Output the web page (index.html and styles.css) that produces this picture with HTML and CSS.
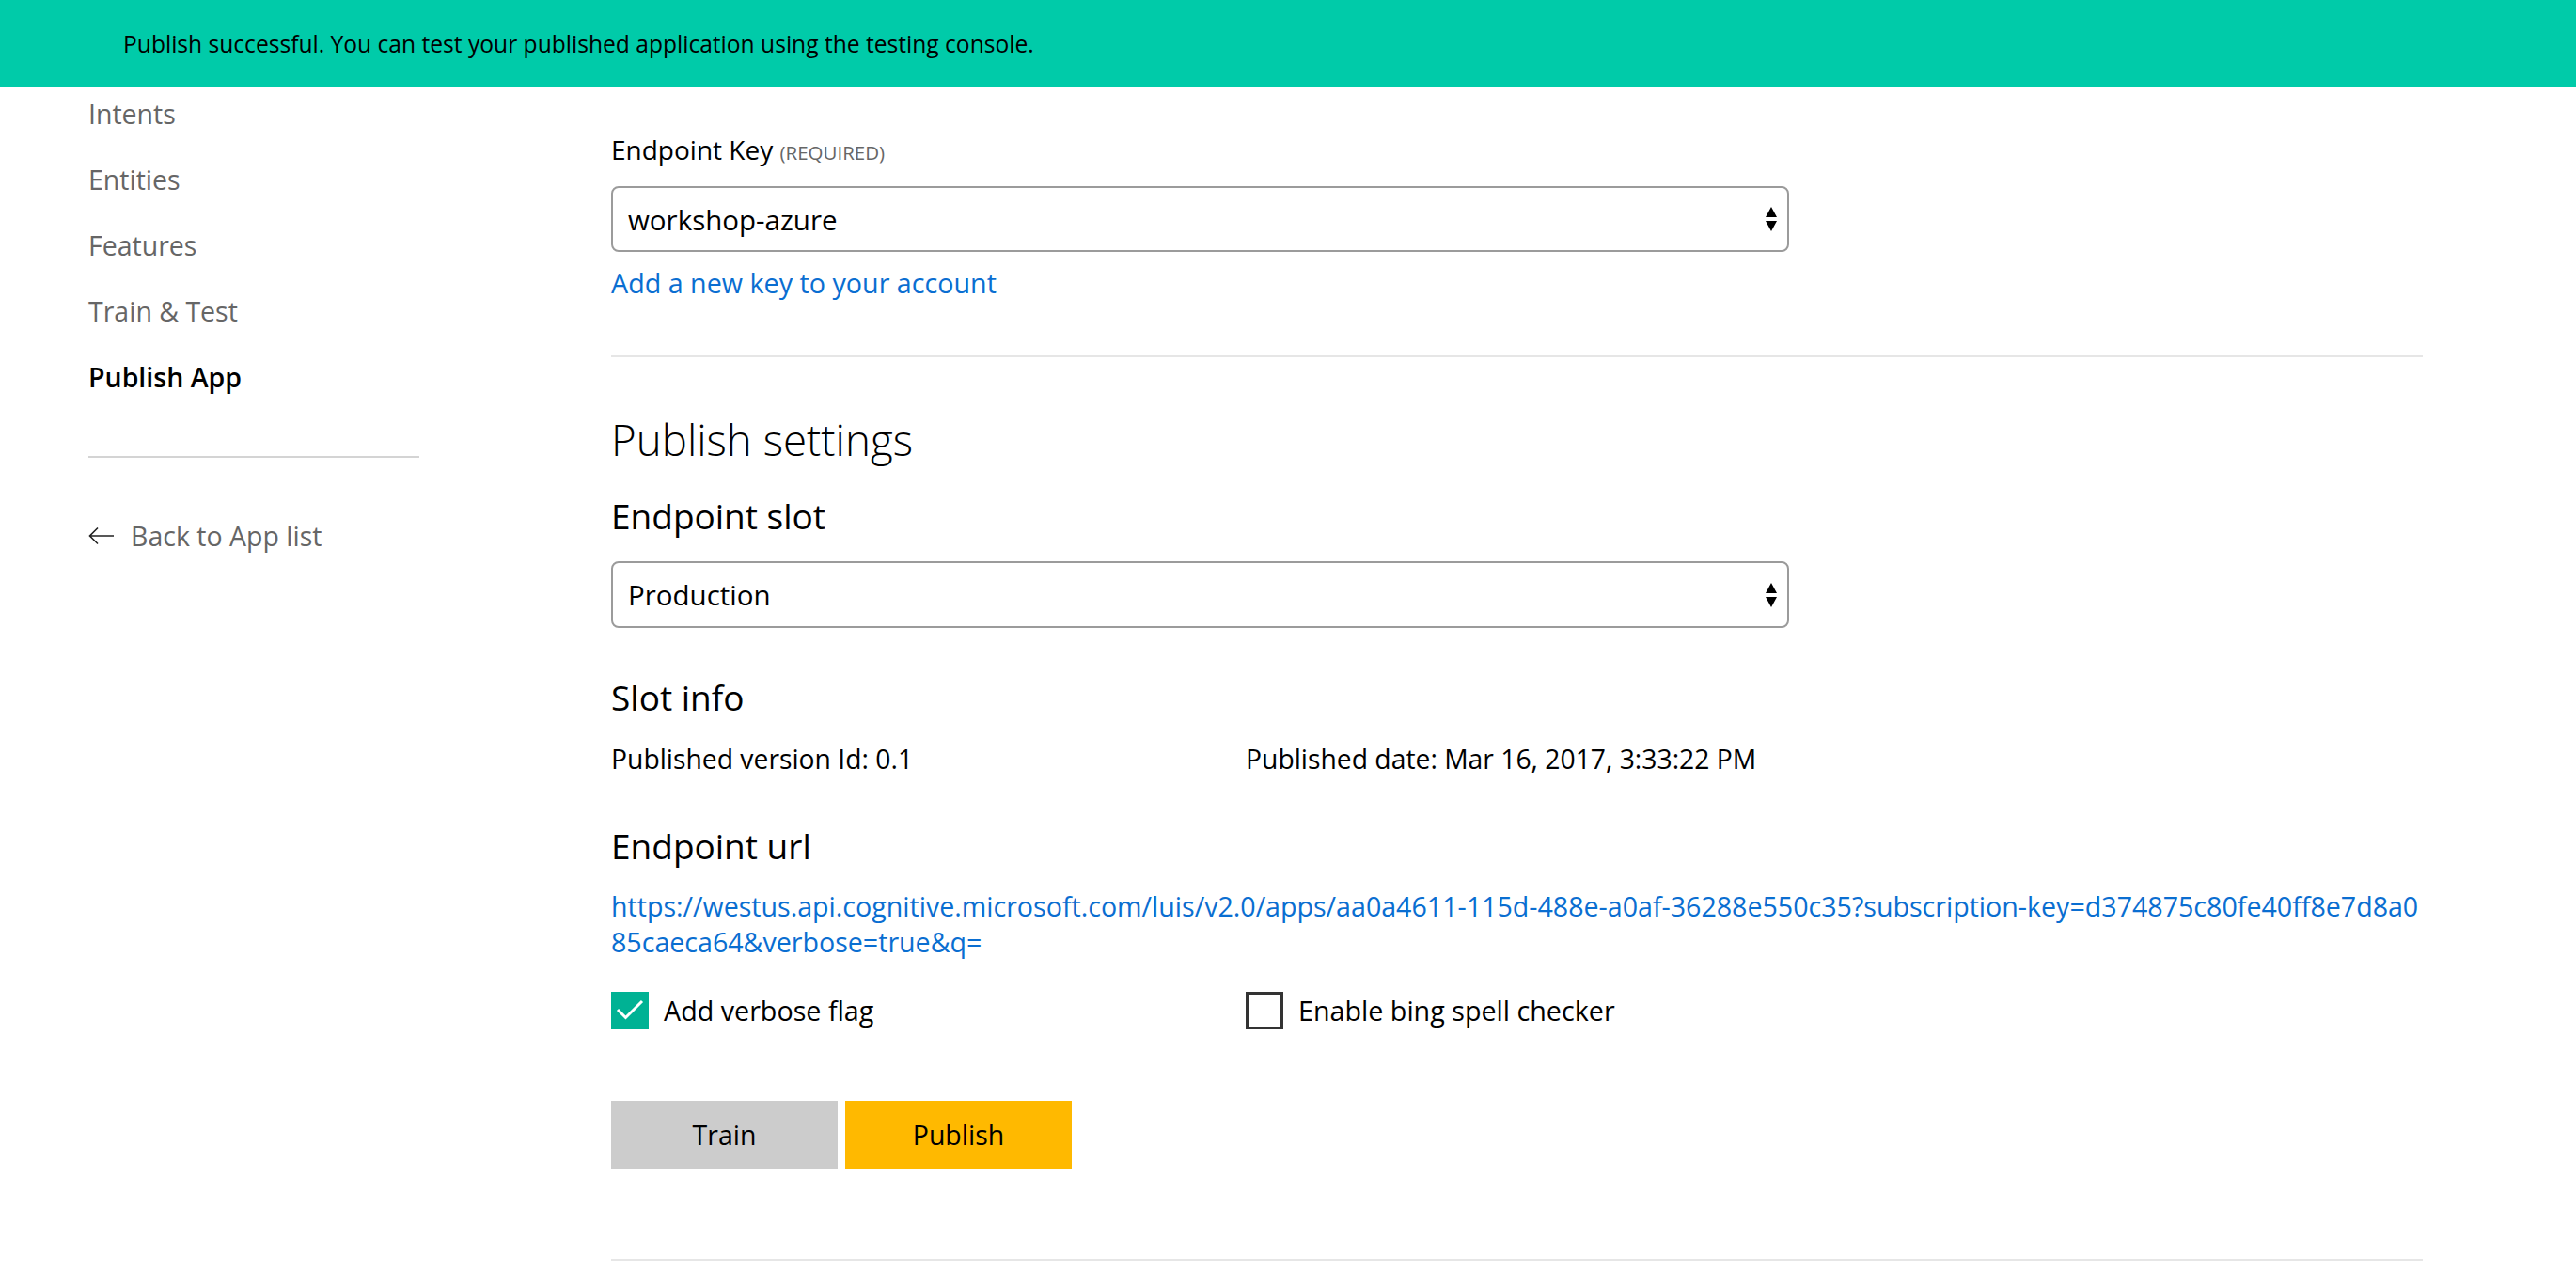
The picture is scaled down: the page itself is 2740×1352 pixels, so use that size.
FILE: index.html
```html
<!DOCTYPE html>
<html lang="en">
<head>
<meta charset="utf-8">
<title>Publish App</title>
<link rel="stylesheet" href="styles.css">
</head>
<body>
<div class="toast">Publish successful. You can test your published application using the testing console.</div>
<div class="page">
  <aside class="sidebar">
    <nav class="nav">
      <a class="nav-item">Intents</a>
      <a class="nav-item">Entities</a>
      <a class="nav-item">Features</a>
      <a class="nav-item">Train &amp; Test</a>
      <a class="nav-item active">Publish App</a>
    </nav>
    <div class="side-rule"></div>
    <a class="back">
      <svg class="back-icon" width="28" height="20" viewBox="0 0 28 20"><path d="M27 10H1.5M10 1.5L1.5 10L10 18.5" fill="none" stroke="#222" stroke-width="1.6"/></svg>
      <span>Back to App list</span>
    </a>
  </aside>
  <main class="main">
    <div class="field-label">Endpoint Key <span class="req">(REQUIRED)</span></div>
    <div class="select">
      <span>workshop-azure</span>
      <svg class="spin" width="14" height="28" viewBox="0 0 14 28"><path d="M7 1L13 12H1Z M1 16H13L7 27Z" fill="#000"/></svg>
    </div>
    <a class="link add-key">Add a new key to your account</a>
    <div class="rule"></div>
    <h1 class="title">Publish settings</h1>
    <h2 class="subtitle slot-title">Endpoint slot</h2>
    <div class="select slot-select">
      <span>Production</span>
      <svg class="spin" width="14" height="28" viewBox="0 0 14 28"><path d="M7 1L13 12H1Z M1 16H13L7 27Z" fill="#000"/></svg>
    </div>
    <h2 class="subtitle info-title">Slot info</h2>
    <div class="two-col info">
      <div>Published version Id: 0.1</div>
      <div>Published date: Mar 16, 2017, 3:33:22 PM</div>
    </div>
    <h2 class="subtitle url-title">Endpoint url</h2>
    <a class="link url">https://westus.api.cognitive.microsoft.com/luis/v2.0/apps/aa0a4611-115d-488e-a0af-36288e550c35?subscription-key=d374875c80fe40ff8e7d8a085caeca64&amp;verbose=true&amp;q=</a>
    <div class="two-col checks">
      <label class="check">
        <span class="box on"><svg width="40" height="40" viewBox="0 0 40 40"><path d="M7 19L15.5 27.5L33 10" fill="none" stroke="#fff" stroke-width="3"/></svg></span>
        <span>Add verbose flag</span>
      </label>
      <label class="check">
        <span class="box off"></span>
        <span>Enable bing spell checker</span>
      </label>
    </div>
    <div class="buttons">
      <button class="btn train">Train</button>
      <button class="btn publish">Publish</button>
    </div>
    <div class="rule bottom-rule"></div>
  </main>
</div>
</body>
</html>
```

FILE: styles.css
```css
html, body {
  margin: 0;
  padding: 0;
  background: #fff;
}
body {
  font-family: "Open Sans", "Noto Sans", sans-serif;
  color: #000;
  width: 2740px;
  height: 1352px;
  overflow: hidden;
  position: relative;
}
.toast {
  position: absolute;
  left: 0;
  top: 0;
  right: 0;
  height: 93px;
  background: #00cba9;
  box-sizing: border-box;
  padding-left: 131px;
  font-size: 24.6px;
  line-height: 93px;
  color: #000;
  z-index: 2;
}
.page {
  display: flex;
  align-items: flex-start;
}
.sidebar {
  width: 352px;
  margin-left: 94px;
  padding-top: 86px;
  display: flex;
  flex-direction: column;
}
.nav {
  display: flex;
  flex-direction: column;
}
.nav-item {
  font-size: 28.5px;
  line-height: 70px;
  color: #666;
}
.nav-item.active {
  color: #000;
  font-weight: 600;
}
.side-rule {
  height: 2px;
  background: #d4d4d4;
  margin-top: 49px;
}
.back {
  margin-top: 64px;
  display: flex;
  align-items: center;
  gap: 17px;
  font-size: 28.5px;
  line-height: 38px;
  color: #666;
}
.back-icon {
  display: block;
}
.main {
  margin-left: 204px;
  width: 1927px;
  padding-top: 141px;
  display: flex;
  flex-direction: column;
  align-items: flex-start;
}
.field-label {
  font-size: 28px;
  line-height: 36px;
}
.req {
  font-size: 20.5px;
  color: #666;
}
.select {
  margin-top: 18px;
  width: 1253px;
  height: 70px;
  box-sizing: border-box;
  border: 2px solid #9b9b9b;
  border-radius: 8px;
  display: flex;
  align-items: center;
  justify-content: space-between;
  padding: 0 10px 0 16px;
  font-size: 29.5px;
}
.spin {
  display: block;
}
.link {
  color: #0a6ed1;
  font-size: 28.7px;
  line-height: 38px;
}
.add-key {
  margin-top: 14px;
}
.rule {
  align-self: stretch;
  height: 2px;
  background: #e6e6e6;
  margin-top: 58px;
}
.title {
  margin: 59px 0 0;
  font-size: 45.7px;
  line-height: 56px;
  font-weight: 300;
}
.subtitle {
  margin: 0;
  font-size: 37px;
  line-height: 48px;
  font-weight: 400;
}
.slot-title {
  margin-top: 30px;
}
.slot-select {
  margin-top: 24px;
  height: 71px;
}
.info-title {
  margin-top: 50px;
}
.two-col {
  display: grid;
  grid-template-columns: 675px 675px;
  font-size: 28.3px;
  line-height: 38px;
}
.info {
  margin-top: 22px;
}
.url-title {
  margin-top: 50px;
}
.url {
  margin-top: 21px;
  width: 1927px;
  font-size: 28.6px;
  word-break: break-all;
}
.checks {
  margin-top: 34px;
  font-size: 28.7px;
}
.check {
  display: flex;
  align-items: center;
  gap: 16px;
  line-height: 40px;
}
.box {
  width: 40px;
  height: 40px;
  box-sizing: border-box;
  display: block;
}
.box svg {
  display: block;
}
.box.on {
  background: #00b294;
}
.box.off {
  border: 3px solid #333;
}
.buttons {
  margin-top: 76px;
  display: flex;
  gap: 8px;
}
.btn {
  width: 241px;
  height: 72px;
  border: none;
  font-family: inherit;
  font-size: 28.5px;
  color: #000;
  padding: 0;
}
.train {
  background: #cccccc;
}
.publish {
  background: #ffb900;
}
.bottom-rule {
  margin-top: 96px;
}
```
